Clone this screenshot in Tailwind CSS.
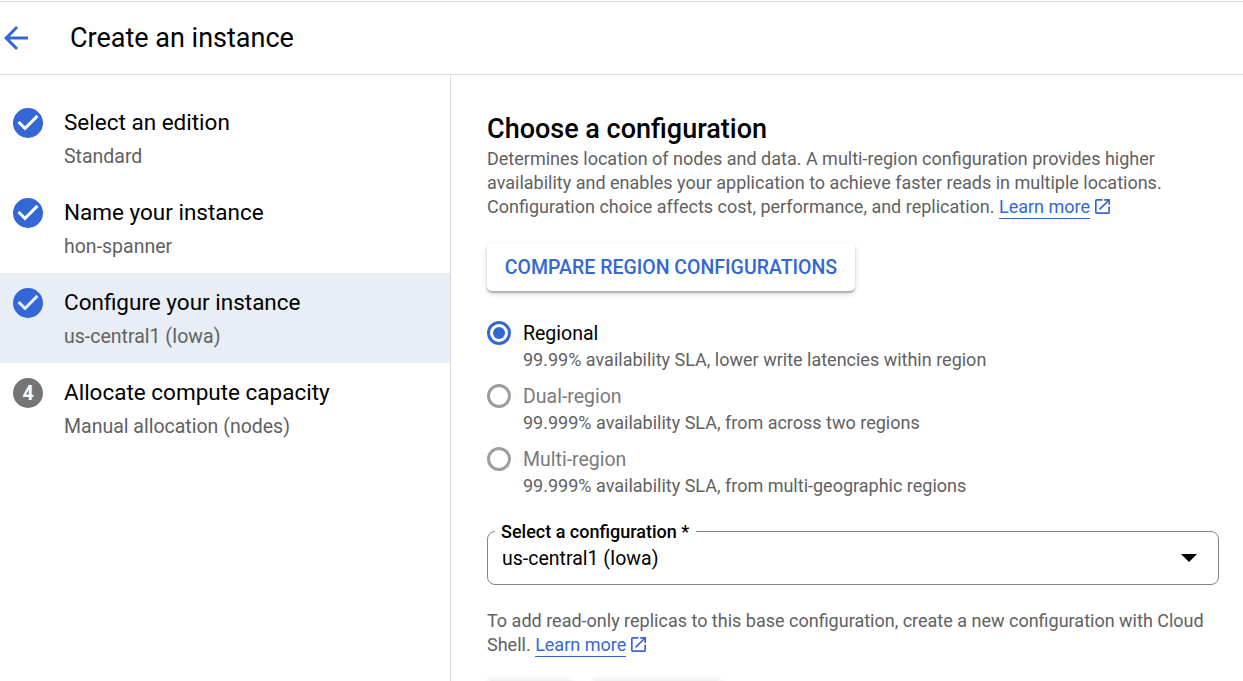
<!DOCTYPE html>
<html lang="en">
<head>
<meta charset="utf-8">
<title>Create an instance</title>
<script src="https://cdn.jsdelivr.net/npm/@tailwindcss/browser@4"></script>
</head>
<body class="h-screen overflow-hidden bg-white font-[Roboto,sans-serif] text-black">
<svg class="hidden">
  <symbol id="check" viewBox="2 2 20 20"><path fill="currentColor" d="M12 2a10 10 0 1 0 0 20 10 10 0 0 0 0-20zM10 17l-5-5 1.41-1.41L10 14.17l7.59-7.59L19 8z"/></symbol>
  <symbol id="external" viewBox="3 3 18 18"><path fill="currentColor" d="M19 19H5V5h7V3H5a2 2 0 0 0-2 2v14a2 2 0 0 0 2 2h14c1.1 0 2-.9 2-2v-7h-2v7zM14 3v2h3.59l-9.83 9.83 1.41 1.41L19 6.41V10h2V3h-7z"/></symbol>
</svg>
<div class="flex h-full flex-col overflow-hidden">
  <header class="mt-px flex h-[74px] shrink-0 items-center border-y border-[#dadce0] pl-1">
    <svg class="h-6 w-6 text-[#3367d6]" viewBox="4 4 16 16" fill="currentColor"><path d="M20 11H7.83l5.59-5.59L12 4l-8 8 8 8 1.41-1.41L7.83 13H20z"/></svg>
    <h1 class="ml-[42px] text-[27px] leading-9">Create an instance</h1>
  </header>
  <div class="flex min-h-0 flex-1">
    <nav class="w-[451px] shrink-0 border-r border-[#dadce0] pt-[18px]">
      <div class="flex h-[90px] gap-[21px] pt-[15px] pl-[13px]">
        <svg class="size-[30px] shrink-0 text-[#3367d6]"><use href="#check"/></svg>
        <div><div class="text-[22.5px] leading-7">Select an edition</div><div class="mt-1.5 text-[19.5px] leading-[30px] text-[#616161]">Standard</div></div>
      </div>
      <div class="flex h-[90px] gap-[21px] pt-[15px] pl-[13px]">
        <svg class="size-[30px] shrink-0 text-[#3367d6]"><use href="#check"/></svg>
        <div><div class="text-[22.5px] leading-7">Name your instance</div><div class="mt-1.5 text-[19.5px] leading-[30px] text-[#616161]">hon-spanner</div></div>
      </div>
      <div class="flex h-[90px] gap-[21px] bg-[#e8edf6] pt-[15px] pl-[13px]">
        <svg class="size-[30px] shrink-0 text-[#3367d6]"><use href="#check"/></svg>
        <div><div class="text-[22.5px] leading-7">Configure your instance</div><div class="mt-1.5 text-[19.5px] leading-[30px] text-[#616161]">us-central1 (Iowa)</div></div>
      </div>
      <div class="flex h-[90px] gap-[21px] pt-[15px] pl-[13px]">
        <div class="flex size-[30px] shrink-0 items-center justify-center rounded-full bg-[#757575] pt-0.5 text-[19.5px] leading-7 font-bold text-white">4</div>
        <div><div class="text-[22.5px] leading-7">Allocate compute capacity</div><div class="mt-1.5 text-[19.5px] leading-[30px] text-[#616161]">Manual allocation (nodes)</div></div>
      </div>
    </nav>
    <main class="min-w-0 flex-1 overflow-hidden pt-9 pl-9 text-[18px] leading-6 text-[#616161]">
      <h2 class="text-[27px] leading-9 font-medium text-black">Choose a configuration</h2>
      <p class="whitespace-nowrap">Determines location of nodes and data. A multi-region configuration provides higher<br>availability and enables your application to achieve faster reads in multiple locations.<br>Configuration choice affects cost, performance, and replication. <a class="border-b border-[#3367d6] pb-px text-[#3367d6]">Learn more</a><svg class="ml-[5px] inline-block size-[15px] align-[-1px] text-[#3367d6]"><use href="#external"/></svg></p>
      <button class="mt-6 block h-12 w-[368px] rounded-[5px] bg-white pt-0.5 text-[19.5px] font-medium whitespace-nowrap text-[#3367d6] shadow-[0_1.5px_1.5px_rgba(0,0,0,0.24),0_3px_6px_rgba(0,0,0,0.14)]">COMPARE REGION CONFIGURATIONS</button>
      <div class="mt-[30px] flex h-[63px] gap-3">
        <div class="flex size-6 shrink-0 items-center justify-center rounded-full border-3 border-[#3367d6]"><div class="size-3 rounded-full bg-[#3367d6]"></div></div>
        <div><div class="text-[19.5px] leading-[26px] text-black">Regional</div><div class="mt-px">99.99% availability SLA, lower write latencies within region</div></div>
      </div>
      <div class="flex h-[63px] gap-3">
        <div class="size-6 shrink-0 rounded-full border-3 border-[#9e9e9e]"></div>
        <div><div class="text-[19.5px] leading-[26px] text-[#7a7a7a]">Dual-region</div><div class="mt-px">99.999% availability SLA, from across two regions</div></div>
      </div>
      <div class="flex h-[63px] gap-3">
        <div class="size-6 shrink-0 rounded-full border-3 border-[#9e9e9e]"></div>
        <div><div class="text-[19.5px] leading-[26px] text-[#7a7a7a]">Multi-region</div><div class="mt-px">99.999% availability SLA, from multi-geographic regions</div></div>
      </div>
      <div class="relative mt-[21px] flex h-[54px] w-[732px] items-center justify-between rounded-lg border border-[#80868b] pr-[21px] pl-[14px] text-[19.5px] text-black">
        <span class="absolute top-[-12px] left-[7px] bg-white pr-[7px] pl-[6px] text-[18px] leading-6 font-medium">Select a configuration *</span>
        <span class="pt-0.5">us-central1 (Iowa)</span>
        <svg class="h-2 w-4" viewBox="0 0 16 8"><path d="M0 0h16L8 8z"/></svg>
      </div>
      <p class="mt-6 whitespace-nowrap">To add read-only replicas to this base configuration, create a new configuration with Cloud<br>Shell. <a class="border-b border-[#3367d6] pb-px text-[#3367d6]">Learn more</a><svg class="ml-[5px] inline-block size-[15px] align-[-1px] text-[#3367d6]"><use href="#external"/></svg></p>
      <div class="mt-6 flex gap-[18px]">
        <div class="h-12 w-[87px] rounded-[5px] bg-white shadow-[0_1.5px_1.5px_rgba(0,0,0,0.22),0_0_7px_rgba(0,0,0,0.12)]"></div>
        <div class="h-12 w-[130px] rounded-[5px] bg-white shadow-[0_1.5px_1.5px_rgba(0,0,0,0.22),0_0_7px_rgba(0,0,0,0.12)]"></div>
      </div>
    </main>
  </div>
</div>
</body>
</html>
